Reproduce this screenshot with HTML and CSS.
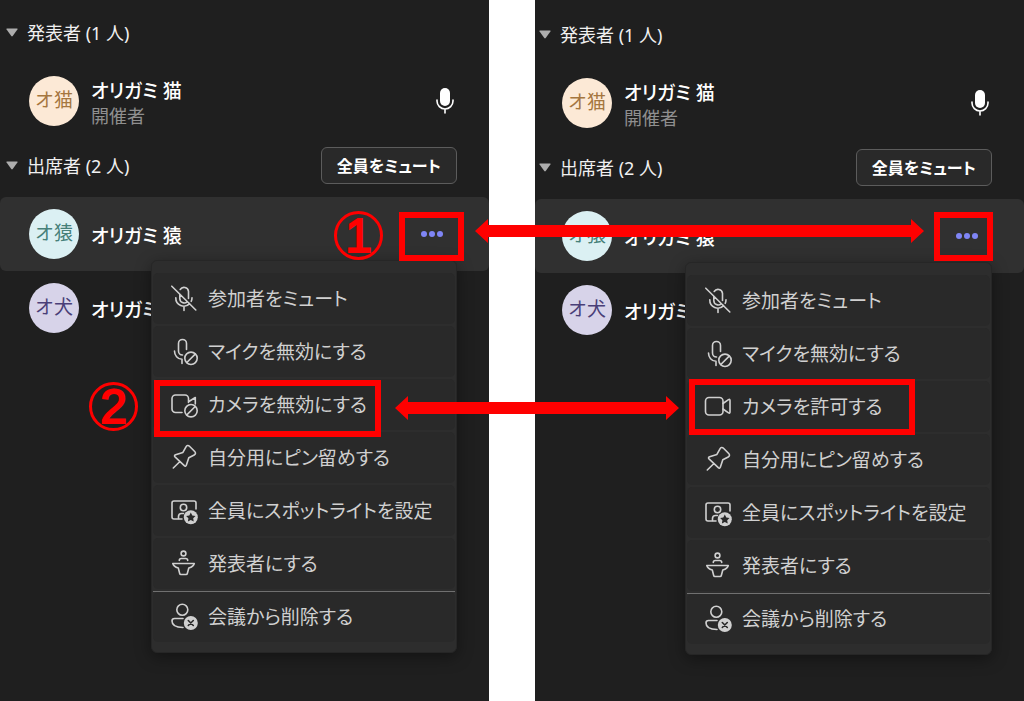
FILE: index.html
```html
<!DOCTYPE html>
<html lang="ja">
<head>
    <meta charset="UTF-8">
    <meta name="viewport" content="width=device-width, initial-scale=1.0">
    <title>参加者</title>
    <link rel="stylesheet" href="styles.css">
</head>
<body>
    <svg class="sprite" aria-hidden="true">
        <symbol id="caret" viewBox="0 0 12 9"><path d="M1 .5h10q1 0 .4.9L6.7 8q-.7.9-1.4 0L.6 1.4Q0 .5 1 .5z" fill="currentColor"/></symbol>
        <symbol id="mic" viewBox="0 0 18 26"><rect x="4" y="0" width="10" height="18" rx="5" fill="currentColor" stroke="none"/><path d="M1 12v1a8 8 0 0 0 16 0v-1M9 21v4"/></symbol>
        <symbol id="dots" viewBox="0 0 22 6"><g fill="currentColor" stroke="none"><circle cx="3" cy="3" r="3"/><circle cx="11" cy="3" r="3"/><circle cx="19" cy="3" r="3"/></g></symbol>
        <symbol id="mic-off" viewBox="0 0 28 28"><path d="M1.800 1.200 25.800 25M9.800 9V13.500a4.500 4.500 0 0 0 7.400 3.400M10.200 4.500a4.500 4.500 0 0 1 8.300 1.800v7.200M5.800 12.800a8 8 0 0 0 13.800 5.800M22 12.800q0 2-.8 3.500M14 21.500v4"/></symbol>
        <symbol id="mic-block" viewBox="0 0 28 28"><path d="M12.500 17a4 4 0 0 1-4-4V5.500a4 4 0 0 1 8 0v6M4.500 13c0 4.500 3 8 7.500 8.300v4.200"/><circle cx="21" cy="20.300" r="6.200"/><path d="m16.800 24.500 8.400-8.400"/></symbol>
        <symbol id="camera-block" viewBox="0 0 28 28"><path d="M12 21.500H5.500a3.500 3.500 0 0 1-3.500-3.500V7.500A3.500 3.500 0 0 1 5.500 4H15a3.500 3.500 0 0 1 3.500 3.500v3.300l6.800-4.300V13M18.500 10.500v1"/><circle cx="21" cy="19.700" r="6.200"/><path d="m16.800 23.900 8.400-8.400"/></symbol>
        <symbol id="camera" viewBox="0 0 28 28"><rect x="1.500" y="4.500" width="17.500" height="17.500" rx="3.500"/><path d="m19 10.500 5.500-3.900q1.500-.8 1.500.8v11.700q0 1.600-1.500.8L19 16"/></symbol>
        <symbol id="pin" viewBox="0 0 28 28"><path d="m3.300 24 6.400-6.300M16 2.800c.8-1.500 2.300-1.700 3.500-.5l5.200 5.200c1.200 1.200 1 2.700-.5 3.500l-5.400 2.800-2.400 7.300c-.4 1.200-1.300 1.400-2.100.6L5 12.900c-.8-.8-.6-1.700.6-2.100l7.300-2.400z"/></symbol>
        <symbol id="spotlight" viewBox="0 0 28 28"><path d="M12 22H4a2 2 0 0 1-2-2V6a2 2 0 0 1 2-2h20a2 2 0 0 1 2 2v6"/><circle cx="13.500" cy="10.500" r="3.200"/><path d="M8.500 21.500v-2q0-3 3-3h2"/><circle cx="20.800" cy="20.200" r="7" fill="currentColor" stroke="none"/><path d="m20.800 15.500 1.500 3 3.200.5-2.300 2.300.5 3.200-2.900-1.500-2.900 1.500.5-3.200-2.300-2.300 3.200-.5z" fill="#292929" stroke="none"/></symbol>
        <symbol id="presenter" viewBox="0 0 28 28"><circle cx="13.500" cy="3.500" r="2.400"/><path d="M9.300 10.500q0-2 2-2h4.400q2 0 2 2M2.800 13.500h21.500q-.7 3-5.500 4.500l-1.500 5.500q-.2 1-1.200 1h-5.200q-1 0-1.200-1L8.300 18q-4.800-1.500-5.500-4.500z"/></symbol>
        <symbol id="remove" viewBox="0 0 28 28"><circle cx="12.300" cy="6.800" r="5.500"/><path d="M13 15.500H4.500Q2 15.500 2 18c0 4.500 4.500 6.500 11 6.500"/><circle cx="20.800" cy="20" r="7" fill="currentColor" stroke="none"/><path d="m18.300 17.500 5 5m0-5-5 5" stroke="#292929"/></symbol>
    </svg>

    <main class="page">
        <section class="panel">
            <div class="group-header">
                <svg class="caret"><use href="#caret"/></svg>
                <h2>発表者 (1 人)</h2>
            </div>
            <div class="person">
                <span class="avatar cat">オ猫</span>
                <div class="who">
                    <p class="name">オリガミ 猫</p>
                    <p class="role">開催者</p>
                </div>
                <svg class="icon mic"><use href="#mic"/></svg>
            </div>
            <div class="group-header">
                <svg class="caret"><use href="#caret"/></svg>
                <h2>出席者 (2 人)</h2>
                <button class="mute-all" type="button">全員をミュート</button>
            </div>
            <div class="person active">
                <span class="avatar monkey">オ猿</span>
                <p class="name">オリガミ 猿</p>
                <button class="more" type="button" aria-label="その他のオプション"><svg class="icon dots"><use href="#dots"/></svg></button>
                <ul class="menu">
                    <li><button type="button"><svg class="icon"><use href="#mic-off"/></svg>参加者をミュート</button></li>
                    <li><button type="button"><svg class="icon"><use href="#mic-block"/></svg>マイクを無効にする</button></li>
                    <li><button type="button"><svg class="icon"><use href="#camera-block"/></svg>カメラを無効にする</button></li>
                    <li><button type="button"><svg class="icon"><use href="#pin"/></svg>自分用にピン留めする</button></li>
                    <li><button type="button"><svg class="icon"><use href="#spotlight"/></svg>全員にスポットライトを設定</button></li>
                    <li><button type="button"><svg class="icon"><use href="#presenter"/></svg>発表者にする</button></li>
                    <li class="divided"><button type="button"><svg class="icon"><use href="#remove"/></svg>会議から削除する</button></li>
                </ul>
            </div>
            <div class="person">
                <span class="avatar dog">オ犬</span>
                <p class="name">オリガミ 犬</p>
            </div>
        </section>

        <section class="panel second">
            <div class="group-header">
                <svg class="caret"><use href="#caret"/></svg>
                <h2>発表者 (1 人)</h2>
            </div>
            <div class="person">
                <span class="avatar cat">オ猫</span>
                <div class="who">
                    <p class="name">オリガミ 猫</p>
                    <p class="role">開催者</p>
                </div>
                <svg class="icon mic"><use href="#mic"/></svg>
            </div>
            <div class="group-header">
                <svg class="caret"><use href="#caret"/></svg>
                <h2>出席者 (2 人)</h2>
                <button class="mute-all" type="button">全員をミュート</button>
            </div>
            <div class="person active">
                <span class="avatar monkey">オ猿</span>
                <p class="name">オリガミ 猿</p>
                <button class="more" type="button" aria-label="その他のオプション"><svg class="icon dots"><use href="#dots"/></svg></button>
                <ul class="menu">
                    <li><button type="button"><svg class="icon"><use href="#mic-off"/></svg>参加者をミュート</button></li>
                    <li><button type="button"><svg class="icon"><use href="#mic-block"/></svg>マイクを無効にする</button></li>
                    <li><button type="button"><svg class="icon"><use href="#camera"/></svg>カメラを許可する</button></li>
                    <li><button type="button"><svg class="icon"><use href="#pin"/></svg>自分用にピン留めする</button></li>
                    <li><button type="button"><svg class="icon"><use href="#spotlight"/></svg>全員にスポットライトを設定</button></li>
                    <li><button type="button"><svg class="icon"><use href="#presenter"/></svg>発表者にする</button></li>
                    <li class="divided"><button type="button"><svg class="icon"><use href="#remove"/></svg>会議から削除する</button></li>
                </ul>
            </div>
            <div class="person">
                <span class="avatar dog">オ犬</span>
                <p class="name">オリガミ 犬</p>
            </div>
        </section>

        <!-- red call-outs over both panels -->
        <span class="step step-1">1</span>
        <span class="step step-2">2</span>
        <div class="frame frame-more-left"></div>
        <div class="frame frame-more-right"></div>
        <div class="frame frame-camera-left"></div>
        <div class="frame frame-camera-right"></div>
        <div class="arrow arrow-more"></div>
        <div class="arrow arrow-camera"></div>
    </main>
</body>
</html>
```

FILE: styles.css
```css
* {
    box-sizing: border-box;
    margin: 0;
    padding: 0;
}

body {
    font-family: "Noto Sans", "Noto Sans CJK JP", sans-serif;
    font-feature-settings: "palt";
    background: #fff;
    color: #fff;
}

button {
    font: inherit;
    font-feature-settings: inherit;
    color: inherit;
    cursor: pointer;
}

.sprite {
    position: absolute;
    width: 0;
    height: 0;
}

.page {
    position: relative;
    display: grid;
    grid-template-columns: 1fr 1fr;
    gap: 46px;
    min-height: 100vh;
    overflow: hidden;
}

.panel {
    --inset: 6px;
    --menu-left: 151px;
    padding-top: 5px;
    background: #1f1f1f;
}

.panel.second {
    --inset: 4px;
    --menu-left: 150px;
    padding-top: 7px;
}

.group-header {
    display: flex;
    align-items: center;
    gap: 9px;
    height: 59px;
    padding: 0 32px 4px var(--inset);
}

.group-header h2 {
    font-size: 18px;
    font-weight: 400;
    line-height: 24px;
    color: #f0f0f0;
}

.caret {
    width: 12px;
    height: 9px;
    color: #adadad;
}

.mute-all {
    height: 37px;
    margin-left: auto;
    padding: 0 15px;
    border: 1px solid #5c5c5c;
    border-radius: 6px;
    background: #292929;
    font-size: 16px;
    font-weight: 700;
    line-height: 24px;
}

.person {
    position: relative;
    display: flex;
    align-items: center;
    gap: 12px;
    height: 74px;
    padding: 0 32px 0 calc(var(--inset) + 23px);
}

.person.active {
    border-radius: 6px;
    background: #303030;
}

.avatar {
    width: 50px;
    height: 50px;
    border-radius: 50%;
    font-size: 19px;
    font-feature-settings: normal;
    line-height: 48px;
    text-align: center;
}

.cat {
    background: #fce9d6;
    color: #a5763f;
}

.monkey {
    background: #dbf0f3;
    color: #468079;
}

.dog {
    background: #d7d3e9;
    color: #4a3f78;
}

.name {
    padding-top: 3px;
    font-size: 19px;
    font-weight: 500;
    line-height: 26px;
}

.role {
    font-size: 18px;
    line-height: 24px;
    color: #8f8f8f;
}

.icon {
    flex: none;
    width: 28px;
    height: 28px;
    fill: none;
    stroke: currentColor;
    stroke-width: 1.6;
    stroke-linecap: round;
    stroke-linejoin: round;
}

.icon.mic {
    width: 18px;
    height: 26px;
    margin: 0 3px 0 auto;
}

.icon.dots {
    display: block;
    width: 22px;
    height: 6px;
}

.more {
    margin-left: auto;
    padding: 12px 14px;
    border: none;
    background: none;
    color: #7f85f5;
}

.menu {
    position: absolute;
    z-index: 1;
    top: 63px;
    left: var(--menu-left);
    right: 32px;
    padding: 12px 1px 8px;
    border: 1px solid #262626;
    border-radius: 6px;
    background: #2d2d2d;
    box-shadow: 0 4px 16px rgba(0, 0, 0, 0.4);
    list-style: none;
}

.menu li {
    height: 53px;
    padding-bottom: 2px;
}

.menu .divided {
    border-top: 1px solid #707070;
}

.menu button {
    display: flex;
    align-items: center;
    gap: 10px;
    width: 100%;
    height: 100%;
    padding: 0 17px;
    border: none;
    border-radius: 5px;
    background: #292929;
    font-size: 19px;
    line-height: 28px;
    color: #d0d0d0;
    white-space: nowrap;
}

.step,
.frame,
.arrow {
    position: absolute;
    z-index: 2;
}

.step {
    width: 49px;
    height: 49px;
    border: 3px solid #f00;
    border-radius: 50%;
    font: 400 48px/44px "Liberation Sans", sans-serif;
    -webkit-text-stroke: 2px #f00;
    text-align: center;
    color: #f00;
}

.step-1 {
    top: 211px;
    left: 334px;
}

.step-2 {
    top: 382px;
    left: 89px;
}

.frame {
    border: 6px solid #f00;
}

.frame-more-left {
    top: 212px;
    left: 399px;
    width: 65px;
    height: 49px;
}

.frame-more-right {
    top: 212px;
    left: 934px;
    width: 59px;
    height: 49px;
}

.frame-camera-left {
    top: 380px;
    left: 154px;
    width: 227px;
    height: 57px;
}

.frame-camera-right {
    top: 379px;
    left: 689px;
    width: 226px;
    height: 56px;
}

.arrow {
    height: 24px;
    background: #f00;
    clip-path: polygon(0 50%, 13px 0, 13px 6px, calc(100% - 13px) 6px, calc(100% - 13px) 0, 100% 50%, calc(100% - 13px) 100%, calc(100% - 13px) 18px, 13px 18px, 13px 100%);
}

.arrow-more {
    top: 219px;
    left: 475px;
    width: 449px;
}

.arrow-camera {
    top: 396px;
    left: 395px;
    width: 284px;
}
```
